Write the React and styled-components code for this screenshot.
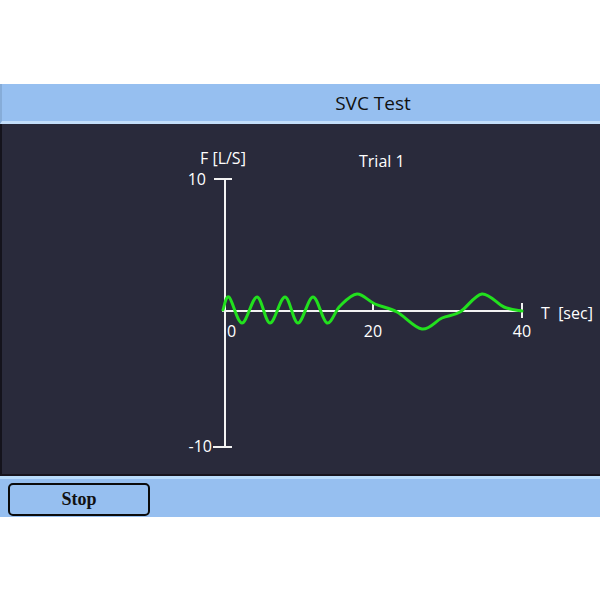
import React from "react";
import styled, { createGlobalStyle } from "styled-components";

const Global = createGlobalStyle`
  html, body { margin: 0; padding: 0; background: #ffffff; }
  body { width: 600px; height: 600px; overflow: hidden; }
`;

const Screen = styled.div`
  width: 600px;
  height: 600px;
  display: flex;
  flex-direction: column;
  padding-top: 84px;
  box-sizing: border-box;
  background: #ffffff;
`;

const TitleBar = styled.header`
  height: 37px;
  background: #96bff0;
  border-bottom: 3px solid #c3defa;
  border-left: 2px solid #86acd8;
  display: flex;
  align-items: center;
  justify-content: center;
  padding-left: 144px;
  font-family: "Open Sans", "Noto Sans", sans-serif;
  font-size: 19px;
  color: #111111;
`;

const Panel = styled.main`
  background: #292a3b;
  border-left: 2px solid #14131c;
  border-bottom: 2px solid #17141d;
  box-sizing: border-box;
  height: 352px;
`;

const Chart = styled.svg`
  display: block;
  width: 598px;
  height: 350px;
  font-family: "Open Sans", "Noto Sans", sans-serif;
`;

const Label = styled.text`
  fill: #ffffff;
  font-size: ${(p) => p.$size || 16}px;
  white-space: pre;
`;

const Footer = styled.footer`
  height: 38px;
  background: #96bff0;
  border-top: 3px solid #b9dcfb;
  display: flex;
  align-items: center;
  padding-left: 8px;
`;

const StopButton = styled.button`
  width: 142px;
  height: 33px;
  margin-top: 2px;
  background: #96bff0;
  border: 2px solid #0b0b0b;
  border-radius: 5px;
  font-family: "Liberation Serif", "DejaVu Serif", serif;
  font-weight: bold;
  font-size: 18px;
  color: #111111;
  padding: 0;
  cursor: pointer;
`;

const pts = [
  [223, 310], [229, 297], [242, 323], [257, 297], [270, 323], [285, 297],
  [298, 323], [313, 297], [327, 323], [340, 306], [357, 294], [375, 304],
  [397, 312], [422, 329], [442, 318], [460, 312], [482, 294], [504, 307],
  [522, 311],
];

function smoothPath(p) {
  let d = `M${p[0][0]},${p[0][1]}`;
  for (let i = 0; i < p.length - 1; i++) {
    const p0 = p[i - 1] || p[i];
    const p1 = p[i];
    const p2 = p[i + 1];
    const p3 = p[i + 2] || p2;
    const c1x = p1[0] + (p2[0] - p0[0]) / 6;
    const c1y = p1[1] + (p2[1] - p0[1]) / 6;
    const c2x = p2[0] - (p3[0] - p1[0]) / 6;
    const c2y = p2[1] - (p3[1] - p1[1]) / 6;
    d += ` C${c1x.toFixed(1)},${c1y.toFixed(1)} ${c2x.toFixed(1)},${c2y.toFixed(1)} ${p2[0]},${p2[1]}`;
  }
  return d;
}

export default function App() {
  return (
    <>
      <Global />
      <Screen>
        <TitleBar>SVC Test</TitleBar>
        <Panel>
          <Chart viewBox="2 124 598 350">
            <g stroke="#f2f2f2" strokeWidth="2" fill="none">
              <line x1="225" y1="179" x2="225" y2="447" />
              <line x1="214" y1="179" x2="232" y2="179" />
              <line x1="213" y1="447" x2="232" y2="447" />
              <line x1="222" y1="311" x2="522" y2="311" />
              <line x1="373" y1="303" x2="373" y2="311" />
              <line x1="522" y1="303" x2="522" y2="318" />
            </g>
            <path d={smoothPath(pts)} stroke="#22e01e" strokeWidth="3" fill="none" strokeLinecap="round" />
            <Label x="200" y="164">F [L/S]</Label>
            <Label x="359" y="167">Trial 1</Label>
            <Label x="206" y="185" textAnchor="end">10</Label>
            <Label x="212" y="452" textAnchor="end">-10</Label>
            <Label x="227" y="337">0</Label>
            <Label x="373" y="337" textAnchor="middle">20</Label>
            <Label x="522" y="337" textAnchor="middle">40</Label>
            <Label x="541" y="319">{"T  [sec]"}</Label>
          </Chart>
        </Panel>
        <Footer>
          <StopButton>Stop</StopButton>
        </Footer>
      </Screen>
    </>
  );
}
